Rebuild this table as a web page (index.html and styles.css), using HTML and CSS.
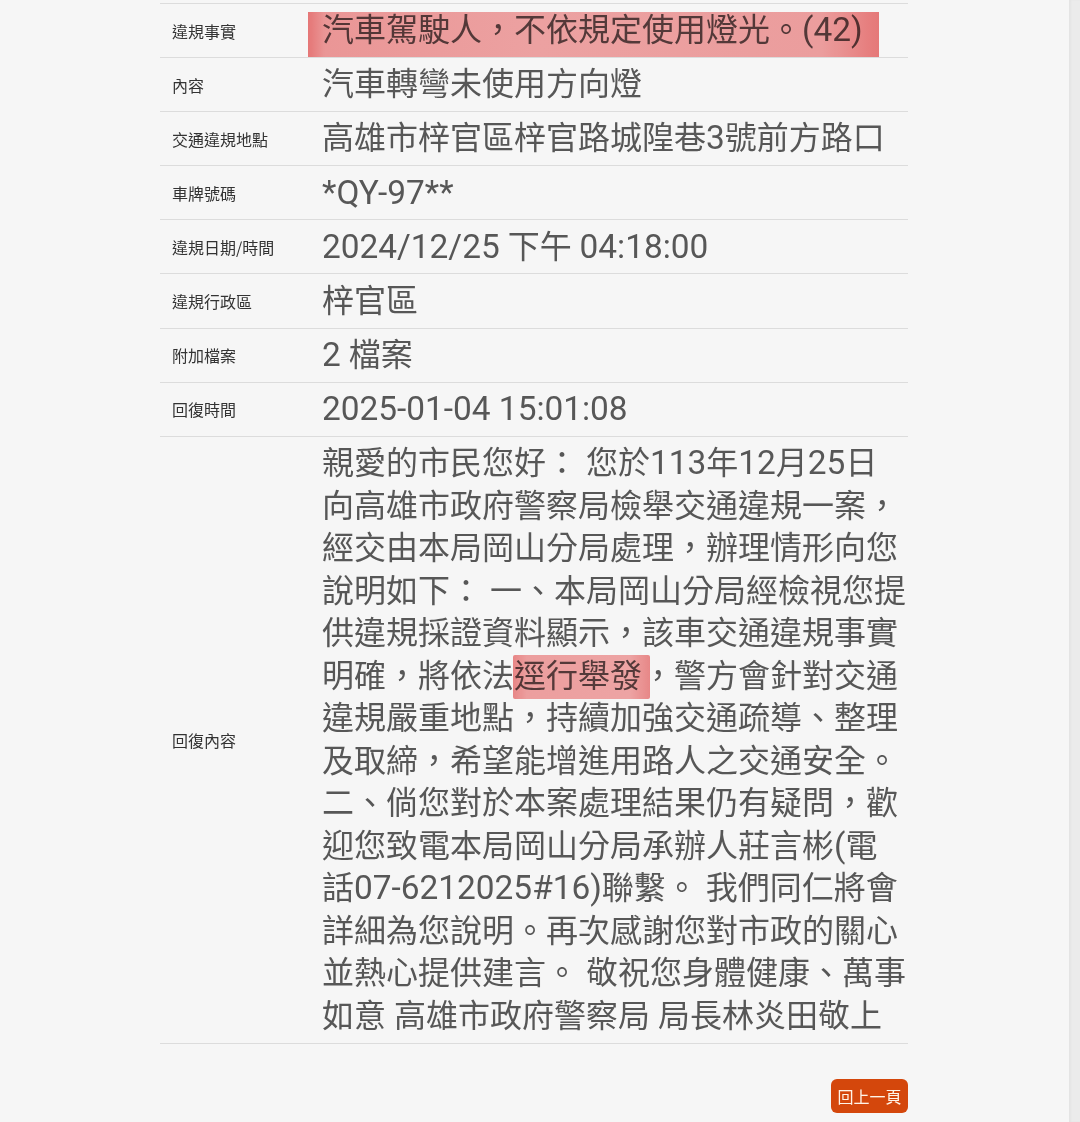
FILE: index.html
```html
<!DOCTYPE html>
<html lang="zh-Hant">
<head>
<meta charset="utf-8">
<title>案件查詢</title>
<link rel="stylesheet" href="styles.css">
</head>
<body>
<div class="page">
  <main class="main">
    <div class="table">
      <div class="row">
        <div class="label">違規事實</div>
        <div class="value"><span class="mark mark-fact">汽車駕駛人，不依規定使用燈光。<span class="en">(42)</span></span></div>
      </div>
      <div class="row">
        <div class="label">內容</div>
        <div class="value">汽車轉彎未使用方向燈</div>
      </div>
      <div class="row">
        <div class="label">交通違規地點</div>
        <div class="value">高雄市梓官區梓官路城隍巷<span class="en">3</span>號前方路口</div>
      </div>
      <div class="row">
        <div class="label">車牌號碼</div>
        <div class="value"><span class="en">*QY-97**</span></div>
      </div>
      <div class="row">
        <div class="label">違規日期/時間</div>
        <div class="value"><span class="en">2024/12/25</span> 下午 <span class="en">04:18:00</span></div>
      </div>
      <div class="row">
        <div class="label">違規行政區</div>
        <div class="value">梓官區</div>
      </div>
      <div class="row">
        <div class="label">附加檔案</div>
        <div class="value"><span class="en">2</span> 檔案</div>
      </div>
      <div class="row">
        <div class="label">回復時間</div>
        <div class="value"><span class="en">2025-01-04 15:01:08</span></div>
      </div>
      <div class="row row-reply">
        <div class="label">回復內容</div>
        <div class="value">親愛的市民您好： 您於<span class="en">113</span>年<span class="en">12</span>月<span class="en">25</span>日<br>向高雄市政府警察局檢舉交通違規一案，<br>經交由本局岡山分局處理，辦理情形向您<br>說明如下： 一、本局岡山分局經檢視您提<br>供違規採證資料顯示，該車交通違規事實<br>明確，將依法<span class="mark mark-word">逕行舉發</span>，警方會針對交通<br>違規嚴重地點，持續加強交通疏導、整理<br>及取締，希望能增進用路人之交通安全。<br>二、倘您對於本案處理結果仍有疑問，歡<br>迎您致電本局岡山分局承辦人莊言彬<span class="en">(</span>電<br>話<span class="en">07-6212025#16)</span>聯繫。 我們同仁將會<br>詳細為您說明。再次感謝您對市政的關心<br>並熱心提供建言。 敬祝您身體健康、萬事<br>如意 高雄市政府警察局 局長林炎田敬上</div>
      </div>
    </div>
    <div class="actions">
      <a class="btn-back" href="#">回上一頁</a>
    </div>
  </main>
  <aside class="edge"></aside>
</div>
</body>
</html>
```

FILE: styles.css
```css
html, body {
  margin: 0;
  padding: 0;
}
body {
  background: #f6f6f6;
  font-family: Roboto, "Noto Sans CJK TC", "Noto Sans", sans-serif;
  color: #555;
}
.page {
  display: flex;
  min-height: 1122px;
}
.main {
  flex: 1;
  padding: 3px 0 0 160px;
}
.edge {
  width: 11px;
  flex: none;
  background: #ebebeb;
  box-shadow: inset 2px 0 2px rgba(0, 0, 0, 0.03);
}
.table {
  width: 748px;
  border-top: 1px solid #dcdcdc;
}
.row {
  display: grid;
  grid-template-columns: 150px 1fr;
  align-items: center;
  border-bottom: 1px solid #dcdcdc;
}
.label {
  padding: 0 12px;
  font-family: "Noto Sans CJK TC", sans-serif;
  font-size: 16px;
  color: #333;
}
.value {
  padding: 5.3px 0 5.3px 12px;
  font-size: 32px;
  line-height: 42.5px;
  color: #575757;
  white-space: nowrap;
}
.en {
  font-size: 33.4px;
}
.row-reply .value {
  padding-bottom: 6px;
}
.mark {
  position: relative;
}
.mark::after {
  content: "";
  position: absolute;
  mix-blend-mode: multiply;
  pointer-events: none;
}
.mark-fact::after {
  left: -14px;
  right: -16px;
  top: 1px;
  bottom: -8px;
  background: linear-gradient(to right, #ee7a7a 0%, #f39c9c 3%, #f5a7a7 40%, #f4a3a3 90%, #f08888 97%, #ee7c7c 100%);
}
.mark-word::after {
  left: -1px;
  right: -8px;
  top: -2px;
  bottom: -4px;
  background: linear-gradient(to right, #f08a8a 0%, #f5a4a4 10%, #f6aaaa 85%, #f08c8c 100%);
  border-radius: 2px;
}
.actions {
  width: 748px;
  display: flex;
  justify-content: flex-end;
  margin-top: 35px;
}
.btn-back {
  display: block;
  width: 77px;
  height: 34px;
  line-height: 34px;
  text-align: center;
  background: #d4470c;
  color: #fff4e8;
  font-family: "Noto Sans CJK TC", sans-serif;
  font-size: 16px;
  border-radius: 6px;
  text-decoration: none;
}
```
